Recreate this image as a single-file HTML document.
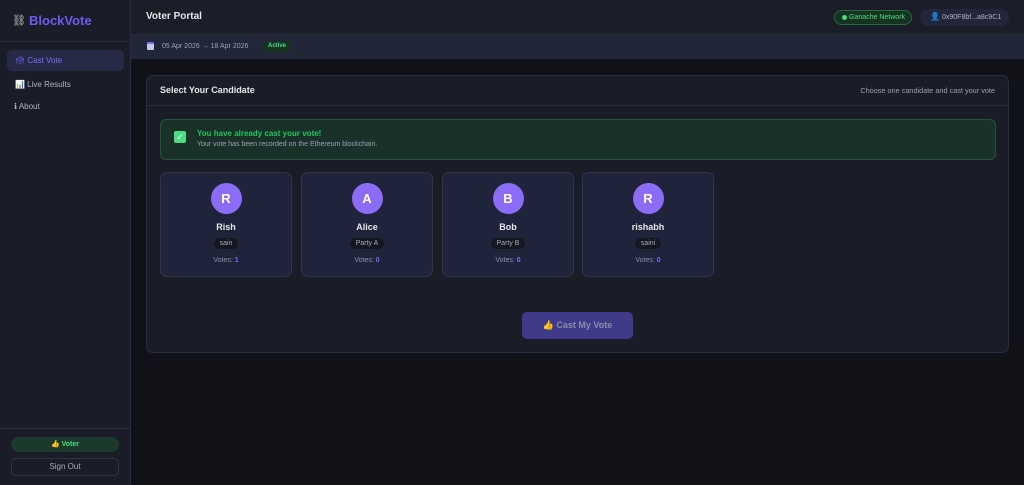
<!DOCTYPE html><html><head><style>
*{box-sizing:border-box;margin:0;padding:0}
body{width:1024px;height:485px;background:#111218;font-family:"Liberation Sans",sans-serif;position:relative;overflow:hidden;color:#e5e7eb}
.a{position:absolute}
.sb{left:0;top:0;width:131px;height:485px;background:#1a1c27;border-right:1px solid #2a2d3d}
.card{background:#20243a;border:1px solid #30354d;border-radius:7px;text-align:center}
.av{width:31px;height:31px;border-radius:50%;background:#8b6cf6;color:#fff;font-weight:bold;font-size:13px;line-height:31px;margin:10px auto 0}
.nm{font-size:9px;font-weight:bold;margin-top:8px;color:#e5e7eb}
.pt{display:inline-block;background:#141620;border-radius:8px;font-size:7px;color:#aab;padding:2px 6px;margin-top:6px}
.vt{font-size:7px;color:#8b90a8;margin-top:7px}.vt b{color:#7c6cf6}
</style></head><body>
<div class="a sb"></div>
<div class="a" style="left:12px;top:14px;font-size:11px;color:#ccc">⛓</div>
<div class="a" style="left:29px;top:13px;font-size:13px;font-weight:bold;color:#6d5cf0">BlockVote</div>
<div class="a" style="left:0;top:41px;width:130px;border-top:1px solid #2a2d3d"></div>
<div class="a" style="left:7px;top:50px;width:117px;height:21px;background:#262a46;border-radius:5px"></div>
<div class="a" style="left:15px;top:56px;font-size:8px;color:#7c6cf6">🗳 Cast Vote</div>
<div class="a" style="left:15px;top:80px;font-size:8px;color:#b0b4c4">📊 Live Results</div>
<div class="a" style="left:14px;top:102px;font-size:8px;color:#b0b4c4">ℹ About</div>
<div class="a" style="left:0;top:428px;width:130px;border-top:1px solid #2a2d3d"></div>
<div class="a" style="left:11px;top:437px;width:108px;height:15px;background:#1c3a2c;border-radius:8px;font-size:7px;color:#4ade80;text-align:center;line-height:15px;font-weight:bold">👍 Voter</div>
<div class="a" style="left:11px;top:458px;width:108px;height:18px;border:1px solid #30354d;border-radius:5px;font-size:8px;color:#aab;text-align:center;line-height:16px">Sign Out</div>
<div class="a" style="left:131px;top:0;width:893px;height:34px;background:#1b1d28"></div>
<div class="a" style="left:146px;top:11px;font-size:10px;font-weight:bold;color:#e5e7eb">Voter Portal</div>
<div class="a" style="left:834px;top:10px;width:78px;height:15px;border:1px solid #1f6b3a;background:#163322;border-radius:8px;font-size:7px;color:#4ade80;line-height:13px;padding-left:14px">Ganache Network</div>
<div class="a" style="left:842px;top:15px;width:5px;height:5px;border-radius:50%;background:#4ade80"></div>
<div class="a" style="left:920px;top:9px;width:89px;height:17px;background:#23263a;border-radius:8px;font-size:7px;color:#b0b4c4;line-height:17px;padding-left:22px">0x90F8bf...a8c9C1</div>
<div class="a" style="left:930px;top:12px;font-size:8px;color:#8b5cf6">👤</div>
<div class="a" style="left:131px;top:34px;width:893px;height:25px;background:#222639;border-top:1px solid #2a2d3d"></div>
<div class="a" style="left:147px;top:42px;width:7px;height:8px;background:#c8c8e8;border-radius:1px;border-top:2px solid #6a7adf"></div>
<div class="a" style="left:162px;top:43px;font-size:7px;color:#9aa0b4">05 Apr 2026 → 18 Apr 2026</div>
<div class="a" style="left:263px;top:41px;width:28px;height:11px;background:#163322;border-radius:6px;font-size:6px;color:#4ade80;text-align:center;line-height:11px;font-weight:bold">Active</div>
<div class="a" style="left:146px;top:75px;width:863px;height:278px;background:#1a1c27;border:1px solid #2a2d3d;border-radius:7px"></div>
<div class="a" style="left:146px;top:105px;width:863px;border-top:1px solid #2a2d3d"></div>
<div class="a" style="left:160px;top:85px;font-size:9px;font-weight:bold">Select Your Candidate</div>
<div class="a" style="right:29px;top:86px;font-size:7.3px;color:#9aa0b4">Choose one candidate and cast your vote</div>
<div class="a" style="left:160px;top:119px;width:836px;height:41px;background:#1a3129;border:1px solid #24553a;border-radius:6px"></div>
<div class="a" style="left:174px;top:131px;width:12px;height:12px;background:#4ade80;border-radius:2px;color:#fff;font-size:9px;text-align:center;line-height:12px">✓</div>
<div class="a" style="left:197px;top:129px;font-size:8px;font-weight:bold;color:#22c55e">You have already cast your vote!</div>
<div class="a" style="left:197px;top:141px;font-size:7px;color:#9aa0b4">Your vote has been recorded on the Ethereum blockchain.</div>
<div class="a card" style="left:160px;top:172px;width:132px;height:105px"><div class="av">R</div><div class="nm">Rish</div><div class="pt">sain</div><div class="vt">Votes: <b>1</b></div></div>
<div class="a card" style="left:301px;top:172px;width:132px;height:105px"><div class="av">A</div><div class="nm">Alice</div><div class="pt">Party A</div><div class="vt">Votes: <b>0</b></div></div>
<div class="a card" style="left:442px;top:172px;width:132px;height:105px"><div class="av">B</div><div class="nm">Bob</div><div class="pt">Party B</div><div class="vt">Votes: <b>0</b></div></div>
<div class="a card" style="left:582px;top:172px;width:132px;height:105px"><div class="av">R</div><div class="nm">rishabh</div><div class="pt">saini</div><div class="vt">Votes: <b>0</b></div></div>
<div class="a" style="left:522px;top:312px;width:111px;height:27px;background:#3f3a8a;border-radius:5px;font-size:9px;font-weight:bold;color:#8c8ca8;text-align:center;line-height:27px">👍 Cast My Vote</div>
</body></html>
